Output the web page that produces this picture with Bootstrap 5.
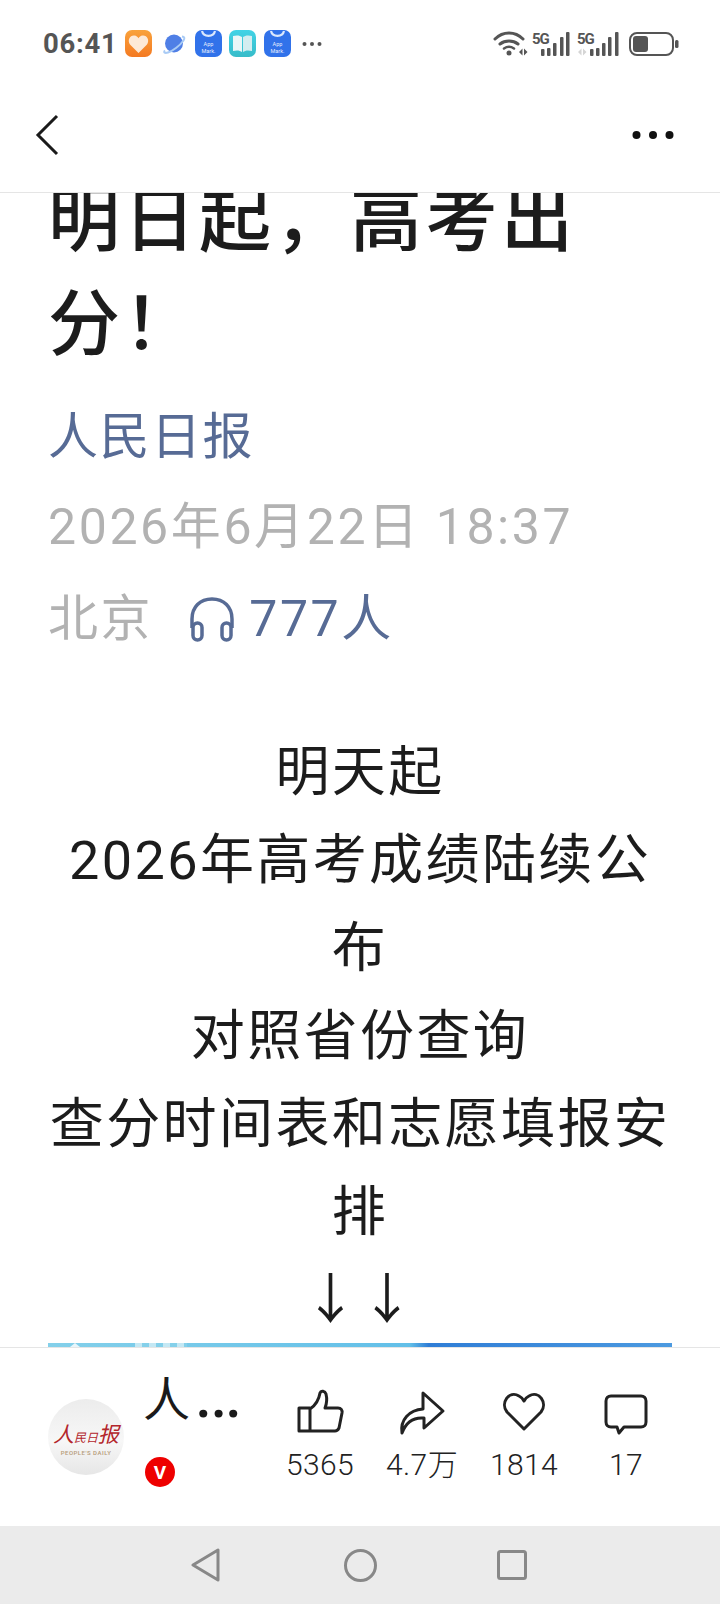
<!DOCTYPE html>
<html lang="zh">
<head>
  <meta charset="UTF-8">
  <meta name="viewport" content="width=device-width, initial-scale=1.0">
  <title>明日起，高考出分！</title>
  <link href="https://cdn.jsdelivr.net/npm/bootstrap@5.3.3/dist/css/bootstrap.min.css" rel="stylesheet">
  <style>
    html, body { height: 100%; }
    body {
      font-family: Roboto, "Noto Sans CJK SC", sans-serif;
      color: #1a1a1a;
      background: #fff;
      overflow: hidden;
    }
    .screen { width: 720px; height: 1604px; }
    .status-row { height: 87px; padding: 0 40px 0 43px; color: #555; }
    .clock { font-size: 27.5px; font-weight: 700; letter-spacing: .7px; line-height: 1; padding-top: 1px; margin-right: .4px; }
    .tile-row { gap: 7.6px; }
    .app-tile { width: 27px; height: 27px; display: block; }
    .top-bar { height: 106px; padding: 0 46px 9px 35px; border-bottom: 1px solid #e5e5e5; }
    .article-area { overflow: hidden; flex: 1 1 0; min-height: 0; }
    .article-inner { padding: 0 48px; margin-top: -24px; }
    .headline { font-size: 72px; font-weight: 500; line-height: 104px; letter-spacing: 3.5px; margin: 0; color: #1c1c1c; }
    .source-name { font-size: 50px; line-height: 60px; letter-spacing: 1.5px; color: #576b95; margin-top: 30px; }
    .meta-line { font-size: 50px; line-height: 60px; color: #b2b2b2; letter-spacing: 2.6px; margin-top: 30px; }
    .meta-place { margin-top: 32px; }
    .listen-icon { margin: 0 14px 0 36px; }
    .listen-count { color: #576b95; }
    .body-text { font-size: 54px; line-height: 88px; letter-spacing: 2.4px; text-align: center; margin-top: 80px; color: #1c1c1c; }
    .article-strip {
      height: 30px;
      margin-top: -2px;
      position: relative;
      background: linear-gradient(90deg, #84d0ea 0, #62bfe8 58%, #2f7dd6 61%, #4c9ae0 100%);
    }
    .strip-mark {
      position: absolute; top: 0; left: 87px; width: 52px; height: 4px;
      background: repeating-linear-gradient(90deg, #c4e8f4 0 7px, #84d0ea 7px 14px);
    }
    .strip-notch {
      position: absolute; top: 0; left: 22px; width: 0; height: 0;
      border: 5px solid transparent; border-top: 0; border-bottom: 4px solid #e8f6fb;
    }
    .action-bar { height: 179px; border-top: 1px solid #e5e5e5; padding: 0 43px 0 48px; }
    .brand-logo {
      width: 76px; height: 76px;
      background: linear-gradient(180deg, #ececec 0, #f7f7f7 55%, #e6e6e6 100%);
    }
    .brand-script { font-family: "Liberation Serif", "Noto Sans CJK SC", serif; font-style: italic; font-size: 12px; color: #b3262c; line-height: 24px; white-space: nowrap; margin-top: 4px; }
    .brand-big { font-size: 21px; }
    .brand-en { font-size: 6px; color: #b59a78; letter-spacing: .5px; line-height: 1; white-space: nowrap; font-weight: 500; }
    .author-col { width: 123px; margin: 0 0 17px 21px; }
    .author-name { font-size: 47px; line-height: 60px; height: 60px; white-space: nowrap; margin-left: -2px; }
    .author-more { font-size: 72px; line-height: 0; margin-left: 4px; vertical-align: -1px; }
    .vip-badge { width: 30px; height: 30px; background: #ee0000; color: #fff; font-size: 19px; font-weight: 700; line-height: 1; margin-top: 27px; }
    .stat-row { margin: 0 0 4px auto; }
    .stat-item { width: 102px; font-size: 30px; line-height: 34px; letter-spacing: .4px; font-weight: 300; color: #222; }
    .stat-item svg { display: block; margin-bottom: 15px; overflow: visible; }
    .sys-nav { height: 78px; background: #ebebeb; gap: 122px; padding-right: 4px; }
    .sys-home { margin: 0 -2px 0 2px; }
  </style>
</head>
<body>
  <div class="screen d-flex flex-column">
    <!-- status bar -->
    <div class="status-row d-flex align-items-center justify-content-between flex-shrink-0">
      <div class="tile-row d-flex align-items-center">
        <span class="clock">06:41</span>
        <svg class="app-tile" viewBox="0 0 27 27">
          <defs><linearGradient id="tileOrange" x1="0" y1="0" x2="0" y2="1"><stop offset="0" stop-color="#f9a23c"/><stop offset="1" stop-color="#f47a22"/></linearGradient></defs>
          <rect width="27" height="27" rx="7" fill="url(#tileOrange)"/>
          <path d="M13.500 23 5 14.500C2 10 5 5 9.500 5.500c1.800.2 3.200 1.300 4 2.800.8-1.500 2.200-2.600 4-2.800C22 5 25 10 22 14.500z" fill="#fde9d6"/>
        </svg>
        <svg class="app-tile" viewBox="0 0 27 27">
          <circle cx="14" cy="13.500" r="9" fill="#4f7fe6"/>
          <path d="M5 20.500c-2 2 0 3 3 2 5-1.500 12-7 15.500-12 1.500-2.500 1-4-1.500-4" fill="none" stroke="#a9cbf5" stroke-width="2"/>
        </svg>
        <svg class="app-tile" viewBox="0 0 27 27">
          <rect width="27" height="27" rx="7" fill="#3172ea"/>
          <path d="M7 1c1.500 6.500 11.500 6.500 13 0" fill="none" stroke="#dbe8fd" stroke-width="2.200"/>
          <text x="13.500" y="16" text-anchor="middle" font-family="Roboto" font-size="5.500" fill="#e6effd">App</text>
          <text x="13.500" y="23" text-anchor="middle" font-family="Roboto" font-size="5.500" fill="#e6effd">Mark.</text>
        </svg>
        <svg class="app-tile" viewBox="0 0 27 27">
          <defs><linearGradient id="tileTeal" x1="0" y1="0" x2="0" y2="1"><stop offset="0" stop-color="#42d3e6"/><stop offset="1" stop-color="#37bcc9"/></linearGradient></defs>
          <rect width="27" height="27" rx="7" fill="url(#tileTeal)"/>
          <path d="M4 6c4-1 7-.5 9 1v15c-2-1.500-5-2-9-1z" fill="#eaf6f7"/>
          <path d="M23 6c-4-1-7-.5-9 1v15c2-1.500 5-2 9-1z" fill="#d3edf0"/>
        </svg>
        <svg class="app-tile" viewBox="0 0 27 27">
          <rect width="27" height="27" rx="7" fill="#3172ea"/>
          <path d="M7 1c1.500 6.500 11.500 6.500 13 0" fill="none" stroke="#dbe8fd" stroke-width="2.200"/>
          <text x="13.500" y="16" text-anchor="middle" font-family="Roboto" font-size="5.500" fill="#e6effd">App</text>
          <text x="13.500" y="23" text-anchor="middle" font-family="Roboto" font-size="5.500" fill="#e6effd">Mark.</text>
        </svg>
        <svg class="ms-1" width="20" height="6" viewBox="0 0 20 6"><g fill="#555"><circle cx="2.500" cy="3" r="2"/><circle cx="10" cy="3" r="2"/><circle cx="17.500" cy="3" r="2"/></g></svg>
      </div>
      <svg width="190" height="28" viewBox="490 30 190 28">
        <g fill="none" stroke="#555" stroke-width="3" stroke-linecap="round">
          <path d="M495 39c8-8 20-8 28 0"/><path d="M500 44c5-4 13-4 18 0"/>
        </g>
        <path d="M504 48.500c3-2 7-2 10 0" fill="none" stroke="#555" stroke-width="2.500" stroke-linecap="round"/>
        <circle cx="509" cy="53" r="2.500" fill="#555"/>
        <path d="M519 52l3.500-3.500v7zM524 48.500l3.500 3.500-3.500 3.500z" fill="#555"/>
        <text x="532" y="44" font-family="Roboto" font-size="15" font-weight="700" letter-spacing="-1" fill="#555">5G</text>
        <g fill="#555">
          <rect x="541" y="49" width="3.500" height="7" rx="1"/><rect x="547" y="48" width="3.500" height="8" rx="1"/>
          <rect x="553" y="43" width="3.500" height="13" rx="1"/><rect x="560" y="37" width="3.500" height="19" rx="1"/>
          <rect x="566" y="32" width="3.500" height="24" rx="1"/>
        </g>
        <text x="577" y="44" font-family="Roboto" font-size="15" font-weight="700" letter-spacing="-1" fill="#555">5G</text>
        <path d="M578 52l3.500-3.500v7zM583 48.500l3.500 3.500-3.500 3.500z" fill="#d5d5d5"/>
        <g fill="#555">
          <rect x="590" y="49" width="3.500" height="7" rx="1"/><rect x="596" y="48" width="3.500" height="8" rx="1"/>
          <rect x="602" y="43" width="3.500" height="13" rx="1"/><rect x="608" y="37" width="3.500" height="19" rx="1"/>
          <rect x="615" y="32" width="3.500" height="24" rx="1"/>
        </g>
        <rect x="630" y="33" width="43" height="22" rx="7" fill="none" stroke="#555" stroke-width="2"/>
        <rect x="633" y="36" width="15" height="16" rx="3" fill="#555"/>
        <rect x="675" y="40" width="3.500" height="8" rx="1.500" fill="#555"/>
      </svg>
    </div>

    <!-- page header -->
    <div class="top-bar d-flex align-items-center justify-content-between flex-shrink-0">
      <svg width="24" height="42" viewBox="0 0 24 42"><path d="M22 2 3 21l19 19" fill="none" stroke="#1a1a1a" stroke-width="3"/></svg>
      <svg width="42" height="10" viewBox="0 0 42 10"><g fill="#111"><circle cx="4.500" cy="5" r="4"/><circle cx="21" cy="5" r="4"/><circle cx="37.500" cy="5" r="4"/></g></svg>
    </div>

    <!-- article -->
    <div class="article-area">
      <div class="article-inner">
        <h1 class="headline">明日起，高考出分！</h1>
        <div class="source-name">人民日报</div>
        <div class="meta-line">2026年6月22日 18:37</div>
        <div class="meta-line meta-place d-flex align-items-center">
          <span>北京</span>
          <svg class="listen-icon" width="46" height="46" viewBox="0 0 46 46"><g fill="none" stroke="#576b95" stroke-width="3.500"><path d="M3 32V23C3 11 11 3 23 3s20 8 20 20v9"/><rect x="4" y="27" width="9" height="17" rx="4.500"/><rect x="33" y="27" width="9" height="17" rx="4.500"/></g></svg>
          <span class="listen-count">777人</span>
        </div>
        <div class="body-text">
          明天起<br>
          2026年高考成绩陆续公布<br>
          对照省份查询<br>
          查分时间表和志愿填报安排<br>
          ↓↓
        </div>
        <div class="article-strip">
          <span class="strip-notch"></span>
          <span class="strip-mark"></span>
        </div>
      </div>
    </div>

    <!-- author and counters -->
    <div class="action-bar d-flex align-items-center flex-shrink-0">
      <div class="brand-logo rounded-circle d-flex flex-column align-items-center justify-content-center flex-shrink-0">
        <div class="brand-script"><span class="brand-big">人</span>民日<span class="brand-big">报</span></div>
        <div class="brand-en">PEOPLE'S DAILY</div>
      </div>
      <div class="author-col flex-shrink-0">
        <div class="author-name">人<span class="author-more">…</span></div>
        <div class="vip-badge rounded-circle d-flex align-items-center justify-content-center">V</div>
      </div>
      <div class="stat-row d-flex">
        <div class="stat-item d-flex flex-column align-items-center">
          <svg width="46" height="44" viewBox="0 0 46 44"><path d="M2 19h11v23H2zM13 42h25c2 0 3-1 4-3l3-15c.5-3-1-5-4-5H28c2-5 2-10 1-14-1-3-5-4-6-1-1 6-4 12-10 16" fill="none" stroke="#222" stroke-width="3" stroke-linejoin="round"/></svg>
          <span>5365</span>
        </div>
        <div class="stat-item d-flex flex-column align-items-center">
          <svg width="46" height="44" viewBox="0 0 46 44"><path d="M3 44C1 31 10 21 24 20V4l20 18-19 17V29C14 28 7 33 3 44z" fill="none" stroke="#222" stroke-width="3" stroke-linejoin="round"/></svg>
          <span>4.7万</span>
        </div>
        <div class="stat-item d-flex flex-column align-items-center">
          <svg width="46" height="44" viewBox="0 -2 46 44"><path d="M23 38 6 21C-1 12 8-1 18 5c2 1 4 3 5 5 1-2 3-4 5-5 10-6 19 7 12 16z" fill="none" stroke="#222" stroke-width="3" stroke-linejoin="round"/></svg>
          <span>1814</span>
        </div>
        <div class="stat-item d-flex flex-column align-items-center">
          <svg width="46" height="44" viewBox="0 -4 46 44"><path d="M8 3h30c3 0 5 2 5 5v21c0 3-2 5-5 5H21l-5 6-2-6H8c-3 0-5-2-5-5V8c0-3 2-5 5-5z" fill="none" stroke="#222" stroke-width="3" stroke-linejoin="round"/></svg>
          <span>17</span>
        </div>
      </div>
    </div>

    <!-- system navigation -->
    <div class="sys-nav d-flex align-items-center justify-content-center flex-shrink-0">
      <svg width="30" height="34" viewBox="0 0 30 34"><path d="M28 2v30L3 17z" fill="none" stroke="#888" stroke-width="3" stroke-linejoin="round"/></svg>
      <svg class="sys-home" width="33" height="33" viewBox="0 0 33 33"><circle cx="16.500" cy="16.500" r="15" fill="none" stroke="#888" stroke-width="3"/></svg>
      <svg width="30" height="30" viewBox="0 0 30 30"><rect x="1.500" y="1.500" width="27" height="27" rx="2" fill="none" stroke="#888" stroke-width="3"/></svg>
    </div>
  </div>
  <script src="https://cdn.jsdelivr.net/npm/bootstrap@5.3.3/dist/js/bootstrap.bundle.min.js"></script>
</body>
</html>
